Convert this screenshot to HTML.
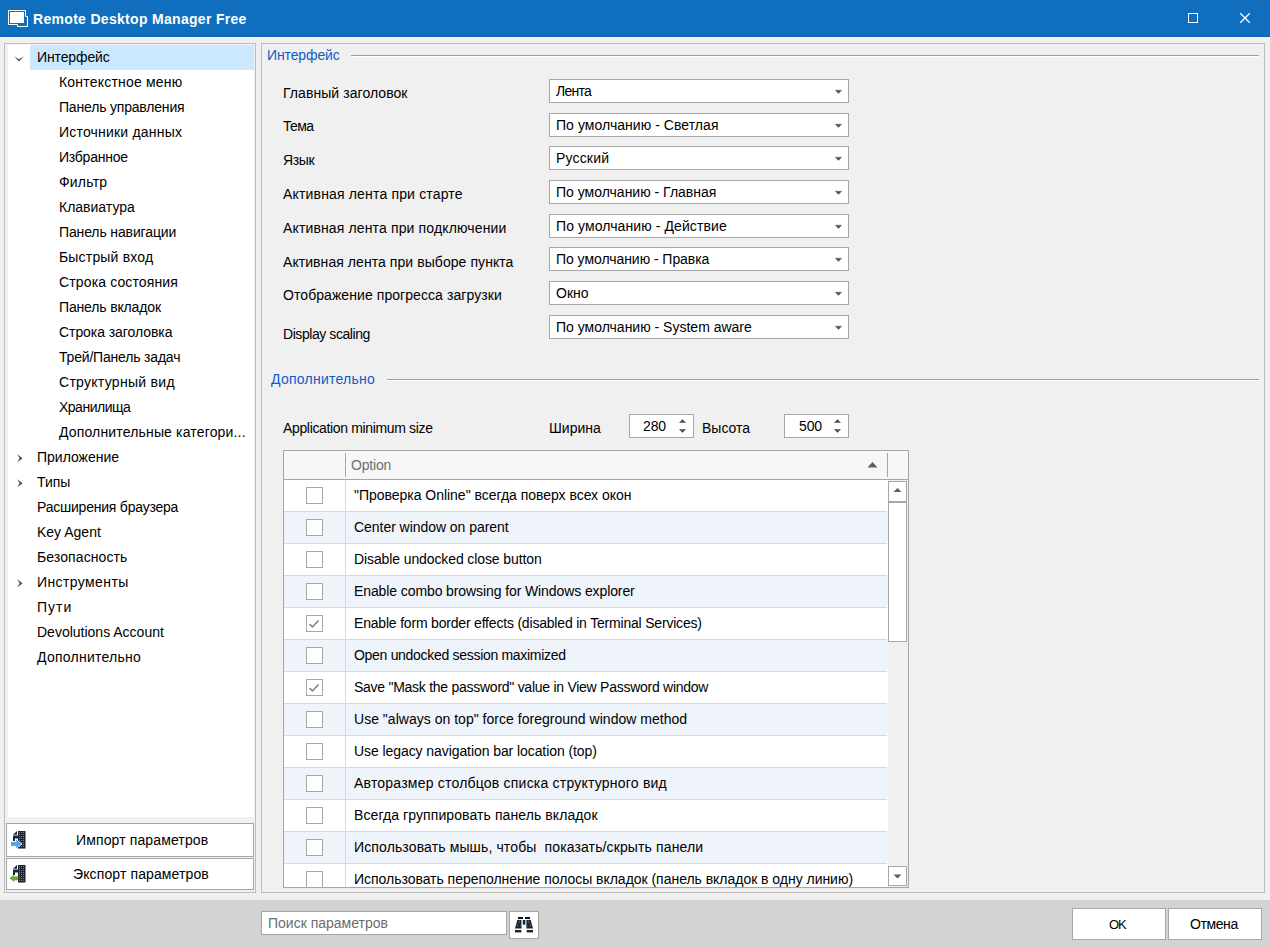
<!DOCTYPE html>
<html><head><meta charset="utf-8">
<style>
*{margin:0;padding:0;box-sizing:border-box}
html,body{width:1270px;height:948px;overflow:hidden;background:#f0f0f0;font-family:"Liberation Sans",sans-serif;font-size:13px;color:#000}
.a{position:absolute}
.t{position:absolute;white-space:pre;line-height:20px;color:#000}
.b{position:absolute;border:1px solid #a6a6a6;background:#fff}
.hl{position:absolute;height:1px}
.vl{position:absolute;width:1px}
</style></head><body>
<!-- title bar -->
<div class="a" style="left:0;top:0;width:1270px;height:36px;background:#106ebe"></div>
<div class="a" style="left:0;top:36px;width:1270px;height:1px;background:#0a63b6"></div>
<div class="a" style="left:0;top:37px;width:1270px;height:1px;background:#f8f6f3"></div>
<svg class="a" style="left:0;top:0" width="40" height="37">
  <path d="M8.5 24.5 V10.5 H25.5 V16.5 H27.5 V26.5 H17.5 V24.5 Z" fill="none" stroke="#fff" stroke-width="1"/>
  <rect x="10" y="12" width="14" height="11" fill="#fff"/>
</svg>
<div class="a" style="left:1188px;top:13px;width:10px;height:10px;border:1px solid #fff"></div>
<svg class="a" style="left:1239px;top:12px" width="13" height="13"><path d="M1.3 1.3 L10.7 10.7 M10.7 1.3 L1.3 10.7" stroke="#fff" stroke-width="1.3"/></svg>

<!-- left panel -->
<div class="a" style="left:4px;top:43px;width:252px;height:850px;border:1px solid #bcbcbc"></div>
<div class="a" style="left:5px;top:44px;width:250px;height:1px;background:#f6f6f6"></div>
<div class="a" style="left:8px;top:45px;width:246px;height:772px;background:#fff"></div>
<div class="a" style="left:30px;top:45px;width:224px;height:25px;background:#cce8ff"></div>
<svg class="a" style="left:8px;top:45px" width="24" height="630">
  <path d="M6.2 11.2 L11 14.2 L15.8 11.2 L11 16.5 Z" fill="#4a514e"/>
  <path d="M9.2 409.2 L14.6 413.3 L9.2 417.6 L11.6 413.3 Z" fill="#4a514e"/>
  <path d="M9.2 434.2 L14.6 438.3 L9.2 442.6 L11.6 438.3 Z" fill="#4a514e"/>
  <path d="M9.2 534.2 L14.6 538.3 L9.2 542.6 L11.6 538.3 Z" fill="#4a514e"/>
</svg>
<div class="b" style="left:6px;top:823px;width:248px;height:34px"></div>
<div class="b" style="left:6px;top:858px;width:248px;height:32px"></div>
<!-- import/export icons -->
<svg class="a" style="left:8px;top:828px" width="22" height="60">
  <rect x="10" y="3" width="7.5" height="17.5" fill="#1c2230"/>
  <path d="M5 6.8 L9 3 V6.8 Z" fill="#1c2230"/><rect x="5" y="7.5" width="5" height="3" fill="#1c2230"/><rect x="5" y="10" width="2" height="3" fill="#1c2230"/>
  <rect x="10" y="37" width="7.5" height="17.5" fill="#1c2230"/>
  <path d="M5 40.8 L9 37 V40.8 Z" fill="#1c2230"/><rect x="5" y="41.5" width="5" height="3" fill="#1c2230"/><rect x="5" y="44" width="2" height="3" fill="#1c2230"/>
  <rect x="11" y="4" width="1" height="1" fill="#7a8088"/><rect x="13" y="4" width="1" height="1" fill="#7a8088"/><rect x="15" y="4" width="1" height="1" fill="#7a8088"/><rect x="11" y="6" width="1" height="1" fill="#7a8088"/><rect x="13" y="6" width="1" height="1" fill="#7a8088"/><rect x="15" y="6" width="1" height="1" fill="#7a8088"/><rect x="11" y="8" width="1" height="1" fill="#7a8088"/><rect x="13" y="8" width="1" height="1" fill="#7a8088"/><rect x="15" y="8" width="1" height="1" fill="#7a8088"/><rect x="11" y="10" width="1" height="1" fill="#7a8088"/><rect x="13" y="10" width="1" height="1" fill="#7a8088"/><rect x="15" y="10" width="1" height="1" fill="#7a8088"/><rect x="11" y="12" width="1" height="1" fill="#7a8088"/><rect x="13" y="12" width="1" height="1" fill="#7a8088"/><rect x="15" y="12" width="1" height="1" fill="#7a8088"/><rect x="11" y="14" width="1" height="1" fill="#7a8088"/><rect x="13" y="14" width="1" height="1" fill="#7a8088"/><rect x="15" y="14" width="1" height="1" fill="#7a8088"/><rect x="11" y="16" width="1" height="1" fill="#7a8088"/><rect x="13" y="16" width="1" height="1" fill="#7a8088"/><rect x="15" y="16" width="1" height="1" fill="#7a8088"/><rect x="11" y="18" width="1" height="1" fill="#7a8088"/><rect x="13" y="18" width="1" height="1" fill="#7a8088"/><rect x="15" y="18" width="1" height="1" fill="#7a8088"/><rect x="11" y="20" width="1" height="1" fill="#7a8088"/><rect x="13" y="20" width="1" height="1" fill="#7a8088"/><rect x="15" y="20" width="1" height="1" fill="#7a8088"/><rect x="11" y="38" width="1" height="1" fill="#7a8088"/><rect x="13" y="38" width="1" height="1" fill="#7a8088"/><rect x="15" y="38" width="1" height="1" fill="#7a8088"/><rect x="11" y="40" width="1" height="1" fill="#7a8088"/><rect x="13" y="40" width="1" height="1" fill="#7a8088"/><rect x="15" y="40" width="1" height="1" fill="#7a8088"/><rect x="11" y="42" width="1" height="1" fill="#7a8088"/><rect x="13" y="42" width="1" height="1" fill="#7a8088"/><rect x="15" y="42" width="1" height="1" fill="#7a8088"/><rect x="11" y="44" width="1" height="1" fill="#7a8088"/><rect x="13" y="44" width="1" height="1" fill="#7a8088"/><rect x="15" y="44" width="1" height="1" fill="#7a8088"/><rect x="11" y="46" width="1" height="1" fill="#7a8088"/><rect x="13" y="46" width="1" height="1" fill="#7a8088"/><rect x="15" y="46" width="1" height="1" fill="#7a8088"/><rect x="11" y="48" width="1" height="1" fill="#7a8088"/><rect x="13" y="48" width="1" height="1" fill="#7a8088"/><rect x="15" y="48" width="1" height="1" fill="#7a8088"/><rect x="11" y="50" width="1" height="1" fill="#7a8088"/><rect x="13" y="50" width="1" height="1" fill="#7a8088"/><rect x="15" y="50" width="1" height="1" fill="#7a8088"/><rect x="11" y="52" width="1" height="1" fill="#7a8088"/><rect x="13" y="52" width="1" height="1" fill="#7a8088"/><rect x="15" y="52" width="1" height="1" fill="#7a8088"/><rect x="11" y="54" width="1" height="1" fill="#7a8088"/><rect x="13" y="54" width="1" height="1" fill="#7a8088"/><rect x="15" y="54" width="1" height="1" fill="#7a8088"/>
  <path d="M7.5 10.5 L14.5 16 L7.5 21.5 Z" fill="#fff"/>
  <path d="M3 14 H8.2 V11.5 L13.5 16 L8.2 20.5 V18 H3 Z" fill="#4aa8f8"/>
  <path d="M1.5 50.3 L6.2 46.5 V48.5 H10.2 V52.3 H6.2 V54 Z" fill="#6aaa30"/>
</svg>

<!-- right panel -->
<div class="a" style="left:261px;top:43px;width:1004px;height:850px;border:1px solid #bdbdbd"></div>
<div class="hl" style="left:351px;top:55px;width:908px;background:#a0a0a0"></div>
<div class="hl" style="left:351px;top:56px;width:908px;background:#fff"></div>
<div class="hl" style="left:387px;top:379px;width:872px;background:#a0a0a0"></div>
<div class="hl" style="left:387px;top:380px;width:872px;background:#fff"></div>

<!-- combos -->
<div class="b" style="left:549px;top:79px;width:300px;height:24px"></div>
<svg class="a" style="left:834px;top:89px" width="9" height="5"><path d="M1.3 1.2 H7.7 L4.5 4.4 Z" fill="#4f5552" stroke="#4f5552" stroke-width="0.4"/></svg>
<div class="b" style="left:549px;top:113px;width:300px;height:24px"></div>
<svg class="a" style="left:834px;top:123px" width="9" height="5"><path d="M1.3 1.2 H7.7 L4.5 4.4 Z" fill="#4f5552" stroke="#4f5552" stroke-width="0.4"/></svg>
<div class="b" style="left:549px;top:146px;width:300px;height:24px"></div>
<svg class="a" style="left:834px;top:156px" width="9" height="5"><path d="M1.3 1.2 H7.7 L4.5 4.4 Z" fill="#4f5552" stroke="#4f5552" stroke-width="0.4"/></svg>
<div class="b" style="left:549px;top:180px;width:300px;height:24px"></div>
<svg class="a" style="left:834px;top:190px" width="9" height="5"><path d="M1.3 1.2 H7.7 L4.5 4.4 Z" fill="#4f5552" stroke="#4f5552" stroke-width="0.4"/></svg>
<div class="b" style="left:549px;top:214px;width:300px;height:24px"></div>
<svg class="a" style="left:834px;top:224px" width="9" height="5"><path d="M1.3 1.2 H7.7 L4.5 4.4 Z" fill="#4f5552" stroke="#4f5552" stroke-width="0.4"/></svg>
<div class="b" style="left:549px;top:247px;width:300px;height:24px"></div>
<svg class="a" style="left:834px;top:257px" width="9" height="5"><path d="M1.3 1.2 H7.7 L4.5 4.4 Z" fill="#4f5552" stroke="#4f5552" stroke-width="0.4"/></svg>
<div class="b" style="left:549px;top:281px;width:300px;height:24px"></div>
<svg class="a" style="left:834px;top:291px" width="9" height="5"><path d="M1.3 1.2 H7.7 L4.5 4.4 Z" fill="#4f5552" stroke="#4f5552" stroke-width="0.4"/></svg>
<div class="b" style="left:549px;top:315px;width:300px;height:24px"></div>
<svg class="a" style="left:834px;top:325px" width="9" height="5"><path d="M1.3 1.2 H7.7 L4.5 4.4 Z" fill="#4f5552" stroke="#4f5552" stroke-width="0.4"/></svg>

<!-- spinners -->
<div class="b" style="left:629px;top:414px;width:65px;height:24px"></div>
<div class="b" style="left:784px;top:414px;width:65px;height:24px"></div>
<svg class="a" style="left:629px;top:414px" width="220" height="24">
  <path d="M50.5 8.5 L53.5 5.5 L56.5 8.5 Z M50.5 15.5 L53.5 18.5 L56.5 15.5 Z" fill="#505552" stroke="#505552" stroke-width="0.6"/>
  <path d="M205.5 8.5 L208.5 5.5 L211.5 8.5 Z M205.5 15.5 L208.5 18.5 L211.5 15.5 Z" fill="#505552" stroke="#505552" stroke-width="0.6"/>
</svg>

<!-- grid -->
<div class="a" style="left:283px;top:450px;width:626px;height:438px;border:1px solid #a6a6a6;background:#fff"></div>
<div class="a" style="left:284px;top:451px;width:624px;height:28px;background:#f7f7f7"></div>
<div class="hl" style="left:284px;top:479px;width:624px;background:#a6a6a6"></div>
<div class="vl" style="left:345px;top:453px;height:24px;background:#a6a6a6"></div>
<div class="vl" style="left:887px;top:453px;height:24px;background:#a6a6a6"></div>
<svg class="a" style="left:866px;top:460px" width="14" height="10"><path d="M1.5 7.5 L6.5 2 L11.5 7.5 Z" fill="#5f5f5f"/></svg>
<div class="a" style="left:284px;top:480px;width:604px;height:31px;background:#fff"></div>
<div class="hl" style="left:284px;top:511px;width:603px;background:#d9d9d9"></div>
<div class="a" style="left:306px;top:487px;width:17px;height:17px;border:1px solid #a6a6a6;background:#fff"></div>
<div class="a" style="left:284px;top:512px;width:604px;height:31px;background:#eff3fa"></div>
<div class="hl" style="left:284px;top:543px;width:603px;background:#d9d9d9"></div>
<div class="a" style="left:306px;top:519px;width:17px;height:17px;border:1px solid #a6a6a6;background:#fff"></div>
<div class="a" style="left:284px;top:544px;width:604px;height:31px;background:#fff"></div>
<div class="hl" style="left:284px;top:575px;width:603px;background:#d9d9d9"></div>
<div class="a" style="left:306px;top:551px;width:17px;height:17px;border:1px solid #a6a6a6;background:#fff"></div>
<div class="a" style="left:284px;top:576px;width:604px;height:31px;background:#eff3fa"></div>
<div class="hl" style="left:284px;top:607px;width:603px;background:#d9d9d9"></div>
<div class="a" style="left:306px;top:583px;width:17px;height:17px;border:1px solid #a6a6a6;background:#fff"></div>
<div class="a" style="left:284px;top:608px;width:604px;height:31px;background:#fff"></div>
<div class="hl" style="left:284px;top:639px;width:603px;background:#d9d9d9"></div>
<div class="a" style="left:306px;top:615px;width:17px;height:17px;border:1px solid #a6a6a6;background:#fff"></div>
<svg class="a" style="left:306px;top:615px" width="17" height="17"><path d="M3.5 9 L6.5 12 L12.5 5.5" fill="none" stroke="#6a6a6a" stroke-width="1.2"/></svg>
<div class="a" style="left:284px;top:640px;width:604px;height:31px;background:#eff3fa"></div>
<div class="hl" style="left:284px;top:671px;width:603px;background:#d9d9d9"></div>
<div class="a" style="left:306px;top:647px;width:17px;height:17px;border:1px solid #a6a6a6;background:#fff"></div>
<div class="a" style="left:284px;top:672px;width:604px;height:31px;background:#fff"></div>
<div class="hl" style="left:284px;top:703px;width:603px;background:#d9d9d9"></div>
<div class="a" style="left:306px;top:679px;width:17px;height:17px;border:1px solid #a6a6a6;background:#fff"></div>
<svg class="a" style="left:306px;top:679px" width="17" height="17"><path d="M3.5 9 L6.5 12 L12.5 5.5" fill="none" stroke="#6a6a6a" stroke-width="1.2"/></svg>
<div class="a" style="left:284px;top:704px;width:604px;height:31px;background:#eff3fa"></div>
<div class="hl" style="left:284px;top:735px;width:603px;background:#d9d9d9"></div>
<div class="a" style="left:306px;top:711px;width:17px;height:17px;border:1px solid #a6a6a6;background:#fff"></div>
<div class="a" style="left:284px;top:736px;width:604px;height:31px;background:#fff"></div>
<div class="hl" style="left:284px;top:767px;width:603px;background:#d9d9d9"></div>
<div class="a" style="left:306px;top:743px;width:17px;height:17px;border:1px solid #a6a6a6;background:#fff"></div>
<div class="a" style="left:284px;top:768px;width:604px;height:31px;background:#eff3fa"></div>
<div class="hl" style="left:284px;top:799px;width:603px;background:#d9d9d9"></div>
<div class="a" style="left:306px;top:775px;width:17px;height:17px;border:1px solid #a6a6a6;background:#fff"></div>
<div class="a" style="left:284px;top:800px;width:604px;height:31px;background:#fff"></div>
<div class="hl" style="left:284px;top:831px;width:603px;background:#d9d9d9"></div>
<div class="a" style="left:306px;top:807px;width:17px;height:17px;border:1px solid #a6a6a6;background:#fff"></div>
<div class="a" style="left:284px;top:832px;width:604px;height:31px;background:#eff3fa"></div>
<div class="hl" style="left:284px;top:863px;width:603px;background:#d9d9d9"></div>
<div class="a" style="left:306px;top:839px;width:17px;height:17px;border:1px solid #a6a6a6;background:#fff"></div>
<div class="a" style="left:284px;top:864px;width:604px;height:23px;background:#fff"></div>
<div class="a" style="left:306px;top:871px;width:17px;height:17px;border:1px solid #a6a6a6;background:#fff"></div>
<div class="vl" style="left:345px;top:480px;height:407px;background:#d9d9d9"></div>
<!-- scrollbar -->
<div class="a" style="left:888px;top:480px;width:20px;height:407px;background:#f0f0f0"></div>
<div class="b" style="left:888px;top:481px;width:19px;height:21px"></div>
<div class="b" style="left:888px;top:502px;width:19px;height:140px"></div>
<div class="b" style="left:888px;top:866px;width:19px;height:20px"></div>
<svg class="a" style="left:888px;top:481px" width="19" height="406">
  <path d="M5.5 11 L9.5 7 L13.5 11 Z" fill="#5f5f5f"/>
  <path d="M5.5 393.5 L9.5 397.5 L13.5 393.5 Z" fill="#5f5f5f"/>
</svg>

<!-- bottom bar -->
<div class="a" style="left:0;top:900px;width:1270px;height:48px;background:#d3d3d3"></div>
<div class="b" style="left:261px;top:911px;width:246px;height:24px"></div>
<div class="b" style="left:509px;top:911px;width:30px;height:28px"></div>
<svg class="a" style="left:509px;top:911px" width="30" height="28">
  <rect x="9" y="6" width="5" height="2" fill="#111"/>
  <rect x="16" y="6" width="5" height="2" fill="#111"/>
  <path d="M8.3 9 H12.5 V17.5 H6 Z" fill="#1b2330"/>
  <path d="M17.3 9 H21.7 L24 17.5 H17.3 Z" fill="#1b2330"/>
  <rect x="14" y="9" width="2.4" height="4.6" fill="#1b2330"/>
  <rect x="12.6" y="9" width="1" height="5" fill="#8fc4e0"/>
  <rect x="16.4" y="9" width="1" height="5" fill="#8fc4e0"/>
  <rect x="6" y="19" width="6.4" height="2.4" fill="#1b2330"/>
  <rect x="17.7" y="19" width="6.3" height="2.4" fill="#1b2330"/>
  <rect x="10" y="10" width="1" height="1" fill="#909090"/><rect x="9" y="12" width="1" height="1" fill="#2a6ad0"/><rect x="8" y="14" width="1" height="1" fill="#909090"/><rect x="11" y="14" width="1" height="1" fill="#2a6ad0"/>
  <rect x="19" y="10" width="1" height="1" fill="#909090"/><rect x="20" y="12" width="1" height="1" fill="#2a6ad0"/><rect x="21" y="14" width="1" height="1" fill="#909090"/><rect x="18" y="15" width="1" height="1" fill="#2a6ad0"/>
</svg>
<div class="b" style="left:1072px;top:908px;width:94px;height:32px"></div>
<div class="b" style="left:1168px;top:908px;width:94px;height:32px"></div>
<div class="t" style="left:33px;top:9px;font-size:14px;letter-spacing:0.308px;color:#fff;font-weight:bold;">Remote Desktop Manager Free</div>
<div class="t" style="left:37px;top:47px;font-size:14px;letter-spacing:-0.125px;">Интерфейс</div>
<div class="t" style="left:59px;top:72px;font-size:14px;letter-spacing:0.200px;">Контекстное меню</div>
<div class="t" style="left:59px;top:97px;font-size:14px;letter-spacing:-0.188px;">Панель управления</div>
<div class="t" style="left:59px;top:122px;font-size:14px;letter-spacing:0.200px;">Источники данных</div>
<div class="t" style="left:59px;top:147px;font-size:14px;letter-spacing:-0.250px;">Избранное</div>
<div class="t" style="left:59px;top:172px;font-size:14px;letter-spacing:0.200px;">Фильтр</div>
<div class="t" style="left:59px;top:197px;font-size:14px;letter-spacing:0.000px;">Клавиатура</div>
<div class="t" style="left:59px;top:222px;font-size:14px;letter-spacing:-0.133px;">Панель навигации</div>
<div class="t" style="left:59px;top:247px;font-size:14px;letter-spacing:0.182px;">Быстрый вход</div>
<div class="t" style="left:59px;top:272px;font-size:14px;letter-spacing:0.133px;">Строка состояния</div>
<div class="t" style="left:59px;top:297px;font-size:14px;letter-spacing:-0.154px;">Панель вкладок</div>
<div class="t" style="left:59px;top:322px;font-size:14px;letter-spacing:-0.067px;">Строка заголовка</div>
<div class="t" style="left:59px;top:347px;font-size:14px;letter-spacing:-0.188px;">Трей/Панель задач</div>
<div class="t" style="left:59px;top:372px;font-size:14px;letter-spacing:0.286px;">Структурный вид</div>
<div class="t" style="left:59px;top:397px;font-size:14px;letter-spacing:-0.500px;">Хранилища</div>
<div class="t" style="left:59px;top:422px;font-size:14px;letter-spacing:0.160px;">Дополнительные категори...</div>
<div class="t" style="left:37px;top:447px;font-size:14px;letter-spacing:0.000px;">Приложение</div>
<div class="t" style="left:37px;top:472px;font-size:14px;letter-spacing:0.000px;">Типы</div>
<div class="t" style="left:37px;top:497px;font-size:14px;letter-spacing:-0.222px;">Расширения браузера</div>
<div class="t" style="left:37px;top:522px;font-size:14px;letter-spacing:0.000px;">Key Agent</div>
<div class="t" style="left:37px;top:547px;font-size:14px;letter-spacing:0.091px;">Безопасность</div>
<div class="t" style="left:37px;top:572px;font-size:14px;letter-spacing:0.400px;">Инструменты</div>
<div class="t" style="left:37px;top:597px;font-size:14px;letter-spacing:1.000px;">Пути</div>
<div class="t" style="left:37px;top:622px;font-size:14px;letter-spacing:0.000px;">Devolutions Account</div>
<div class="t" style="left:37px;top:647px;font-size:14px;letter-spacing:0.250px;">Дополнительно</div>
<div class="t" style="left:267px;top:45px;font-size:14px;letter-spacing:-0.125px;color:#0f5cc6;">Интерфейс</div>
<div class="t" style="left:271px;top:369px;font-size:14px;letter-spacing:0.250px;color:#0f5cc6;">Дополнительно</div>
<div class="t" style="left:283px;top:83px;font-size:14px;letter-spacing:0.062px;">Главный заголовок</div>
<div class="t" style="left:283px;top:116px;font-size:14px;letter-spacing:-0.667px;">Тема</div>
<div class="t" style="left:283px;top:150px;font-size:14px;letter-spacing:-0.333px;">Язык</div>
<div class="t" style="left:283px;top:184px;font-size:14px;letter-spacing:0.167px;">Активная лента при старте</div>
<div class="t" style="left:283px;top:218px;font-size:14px;letter-spacing:0.138px;">Активная лента при подключении</div>
<div class="t" style="left:283px;top:252px;font-size:14px;letter-spacing:0.065px;">Активная лента при выборе пункта</div>
<div class="t" style="left:283px;top:285px;font-size:14px;letter-spacing:0.069px;">Отображение прогресса загрузки</div>
<div class="t" style="left:283px;top:324px;font-size:14px;letter-spacing:-0.429px;">Display scaling</div>
<div class="t" style="left:556px;top:81px;font-size:14px;letter-spacing:-0.750px;">Лента</div>
<div class="t" style="left:556px;top:115px;font-size:14px;letter-spacing:0.048px;">По умолчанию - Светлая</div>
<div class="t" style="left:556px;top:148px;font-size:14px;letter-spacing:0.167px;">Русский</div>
<div class="t" style="left:556px;top:182px;font-size:14px;letter-spacing:0.000px;">По умолчанию - Главная</div>
<div class="t" style="left:556px;top:216px;font-size:14px;letter-spacing:0.091px;">По умолчанию - Действие</div>
<div class="t" style="left:556px;top:249px;font-size:14px;letter-spacing:-0.050px;">По умолчанию - Правка</div>
<div class="t" style="left:556px;top:283px;font-size:14px;letter-spacing:0.000px;">Окно</div>
<div class="t" style="left:556px;top:317px;font-size:14px;letter-spacing:0.000px;">По умолчанию - System aware</div>
<div class="t" style="left:283px;top:418px;font-size:14px;letter-spacing:-0.348px;">Application minimum size</div>
<div class="t" style="left:549px;top:418px;font-size:14px;letter-spacing:0.000px;">Ширина</div>
<div class="t" style="left:702px;top:418px;font-size:14px;letter-spacing:0.000px;">Высота</div>
<div class="t" style="left:643px;top:416px;font-size:14px;letter-spacing:-0.100px;">280</div>
<div class="t" style="left:799px;top:416px;font-size:14px;letter-spacing:-0.100px;">500</div>
<div class="t" style="left:351px;top:455px;font-size:14px;letter-spacing:-0.200px;color:#6e6e6e;">Option</div>
<div class="t" style="left:354px;top:485px;font-size:14px;letter-spacing:-0.025px;">"Проверка Online" всегда поверх всех окон</div>
<div class="t" style="left:354px;top:517px;font-size:14px;letter-spacing:-0.045px;">Center window on parent</div>
<div class="t" style="left:354px;top:549px;font-size:14px;letter-spacing:-0.107px;">Disable undocked close button</div>
<div class="t" style="left:354px;top:581px;font-size:14px;letter-spacing:-0.098px;">Enable combo browsing for Windows explorer</div>
<div class="t" style="left:354px;top:613px;font-size:14px;letter-spacing:-0.193px;">Enable form border effects (disabled in Terminal Services)</div>
<div class="t" style="left:354px;top:645px;font-size:14px;letter-spacing:-0.300px;">Open undocked session maximized</div>
<div class="t" style="left:354px;top:677px;font-size:14px;letter-spacing:-0.264px;">Save "Mask the password" value in View Password window</div>
<div class="t" style="left:354px;top:709px;font-size:14px;letter-spacing:0.020px;">Use "always on top" force foreground window method</div>
<div class="t" style="left:354px;top:741px;font-size:14px;letter-spacing:-0.077px;">Use legacy navigation bar location (top)</div>
<div class="t" style="left:354px;top:773px;font-size:14px;letter-spacing:0.214px;">Авторазмер столбцов списка структурного вид</div>
<div class="t" style="left:354px;top:805px;font-size:14px;letter-spacing:0.091px;">Всегда группировать панель вкладок</div>
<div class="t" style="left:354px;top:837px;font-size:14px;letter-spacing:0.128px;">Использовать мышь, чтобы  показать/скрыть панели</div>
<div class="t" style="left:354px;top:869px;font-size:14px;letter-spacing:-0.029px;">Использовать переполнение полосы вкладок (панель вкладок в одну линию)</div>
<div class="t" style="left:76px;top:830px;font-size:14px;letter-spacing:0.125px;">Импорт параметров</div>
<div class="t" style="left:73px;top:864px;font-size:14px;letter-spacing:0.118px;">Экспорт параметров</div>
<div class="t" style="left:268px;top:913px;font-size:14px;letter-spacing:0.000px;color:#6d6d6d;">Поиск параметров</div>
<div class="t" style="left:1109px;top:915px;font-size:13px;letter-spacing:-1.000px;">OK</div>
<div class="t" style="left:1190px;top:914px;font-size:14px;letter-spacing:-0.400px;">Отмена</div>
</body></html>
